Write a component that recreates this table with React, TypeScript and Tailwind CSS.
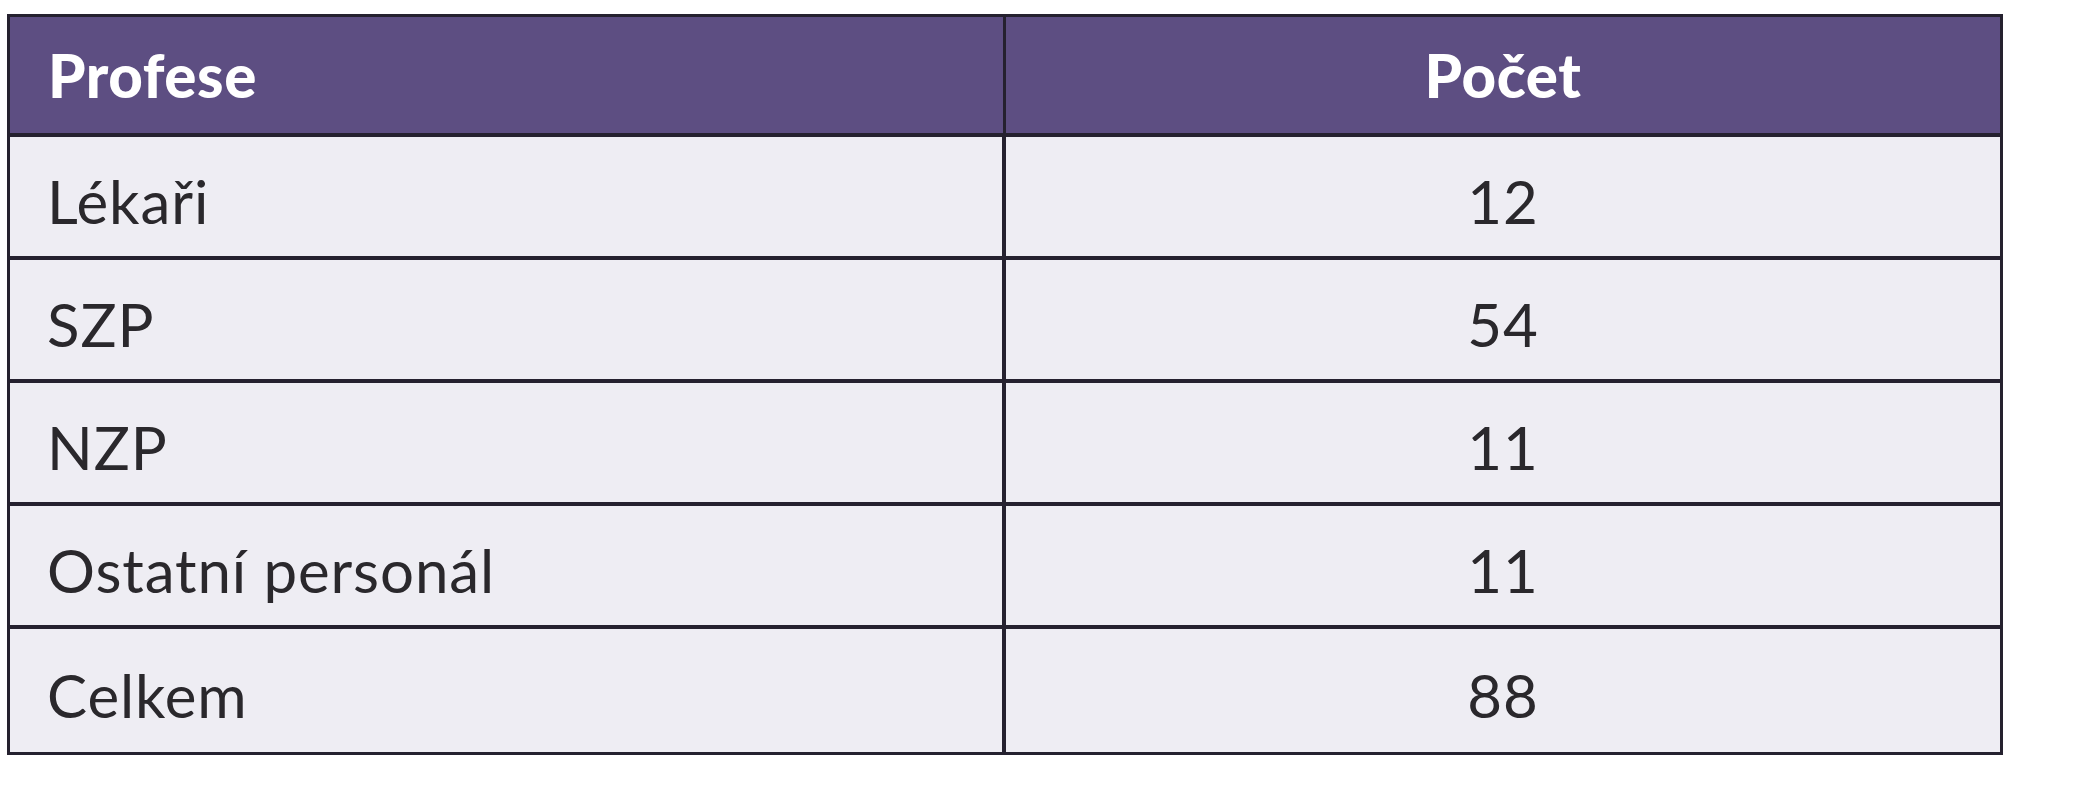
import React from 'react';

const rows: [string, string][] = [
  ['Lékaři', '12'],
  ['SZP', '54'],
  ['NZP', '11'],
  ['Ostatní personál', '11'],
  ['Celkem', '88'],
];

const App: React.FC = () => {
  return (
    <div className="w-[2073px] h-[800px] bg-white pt-[14px] pl-[7px] font-['Lato',sans-serif]">
      <div className="w-[1996px] border-[3px] border-[#25212f] bg-[#eeedf3]">
        {/* header */}
        <div className="flex h-[120px] border-b-[4px] border-[#25212f] bg-[#5d4e82] text-white font-black text-[60px] tracking-[0.01em]">
          <div className="w-[996px] flex items-center pl-[38px] border-r-[3px] border-[#25212f]">Profese</div>
          <div className="flex-1 flex items-center justify-center">Počet</div>
        </div>

        {rows.map(([name, count], i) => (
          <div
            key={name}
            className={`flex h-[123px] text-[#2a282c] text-[60px] font-normal tracking-[0.015em] ${
              i < rows.length - 1 ? 'border-b-[4px] border-[#25212f]' : ''
            }`}
          >
            <div className="w-[996px] flex items-center pl-[37px] pt-[8px] border-r-[4px] border-[#25212f]">{name}</div>
            <div className="flex-1 flex items-center justify-center pt-[8px]">{count}</div>
          </div>
        ))}
      </div>
    </div>
  );
};

export default App;
